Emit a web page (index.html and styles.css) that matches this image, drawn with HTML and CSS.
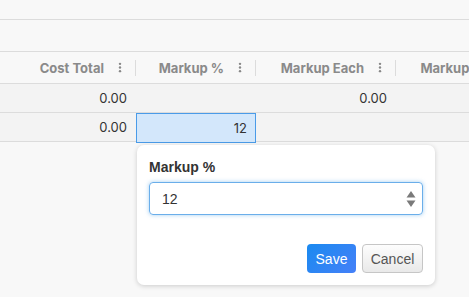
FILE: index.html
```html
<!DOCTYPE html>
<html lang="en">
<head>
    <meta charset="UTF-8">
    <meta name="viewport" content="width=device-width, initial-scale=1.0">
    <title>Markup grid</title>
    <link rel="stylesheet" href="styles.css">
</head>
<body>
    <div class="toolbar"></div>
    <div class="subbar"></div>

    <div class="grid">
        <div class="head-cell"><span>Cost Total</span><svg class="kebab" viewBox="0 0 4 12"><circle cx="2" cy="2" r="1.3"/><circle cx="2" cy="6" r="1.3"/><circle cx="2" cy="10" r="1.3"/></svg></div>
        <div class="head-cell"><span>Markup %</span><svg class="kebab" viewBox="0 0 4 12"><circle cx="2" cy="2" r="1.3"/><circle cx="2" cy="6" r="1.3"/><circle cx="2" cy="10" r="1.3"/></svg></div>
        <div class="head-cell"><span>Markup Each</span><svg class="kebab" viewBox="0 0 4 12"><circle cx="2" cy="2" r="1.3"/><circle cx="2" cy="6" r="1.3"/><circle cx="2" cy="10" r="1.3"/></svg></div>
        <div class="head-cell"><span>Markup Total</span><svg class="kebab" viewBox="0 0 4 12"><circle cx="2" cy="2" r="1.3"/><circle cx="2" cy="6" r="1.3"/><circle cx="2" cy="10" r="1.3"/></svg></div>

        <div class="cell">0.00</div>
        <div class="cell"></div>
        <div class="cell">0.00</div>
        <div class="cell"></div>

        <div class="cell">0.00</div>
        <div class="cell editing">12</div>
        <div class="cell"></div>
        <div class="cell"></div>
    </div>

    <div class="popup">
        <label class="popup-label" for="markup">Markup %</label>
        <div class="number-field">
            <input id="markup" type="text" value="12">
            <svg class="spinner" viewBox="0 0 10 18"><path d="M5 1 L9.5 7.5 H0.5 Z"/><path d="M5 17 L9.5 10.5 H0.5 Z"/></svg>
        </div>
        <div class="popup-actions">
            <button class="btn btn-save">Save</button>
            <button class="btn btn-cancel">Cancel</button>
        </div>
    </div>
</body>
</html>
```

FILE: styles.css
```css
body {
    margin: 0;
    padding: 0;
    background: #f8f8f8;
    font-family: 'Inter', 'Noto Sans', sans-serif;
    overflow: hidden;
    position: relative;
    height: 297px;
}

.toolbar {
    height: 19px;
    border-bottom: 1px solid #dcdcdc;
}

.subbar {
    height: 31px;
    border-bottom: 1px solid #dcdcdc;
}

.grid {
    display: grid;
    grid-template-columns: 136px 120px 140px 140px;
    grid-auto-rows: 29px;
    grid-template-rows: 32px;
}

.head-cell {
    position: relative;
    display: flex;
    align-items: center;
    justify-content: flex-end;
    gap: 8px;
    padding-right: 8px;
    border-bottom: 1px solid #dcdcdc;
    font-size: 13px;
    font-weight: 700;
    color: #8a8a8a;
    white-space: nowrap;
}

.head-cell::after {
    content: '';
    position: absolute;
    right: 0;
    top: 8px;
    height: 16px;
    border-right: 1px solid #dcdcdc;
}

.kebab {
    width: 16px;
    height: 11px;
    fill: #888;
}

.cell {
    display: flex;
    align-items: center;
    justify-content: flex-end;
    padding-right: 9px;
    background: #f3f3f3;
    border-bottom: 1px solid #dcdcdc;
    font-size: 13px;
    color: #333;
}

.cell.editing {
    background: #d3e7fb;
    border: 1px solid #4a9be8;
    padding-right: 8px;
    height: 28px;
}

.popup {
    position: absolute;
    left: 137px;
    top: 145px;
    width: 274px;
    height: 116px;
    padding: 12px 12px 12px;
    background: #fff;
    border-radius: 7px;
    box-shadow: 0 1px 5px rgba(0, 0, 0, 0.18);
    font-family: 'Liberation Sans', Arial, sans-serif;
    display: flex;
    flex-direction: column;
}

.popup-label {
    font-size: 14px;
    font-weight: bold;
    color: #333;
    line-height: 20px;
    margin-bottom: 5px;
}

.number-field {
    display: flex;
    align-items: center;
    height: 31px;
    border: 1px solid #6aaeea;
    border-radius: 4px;
    box-shadow: 0 0 4px rgba(102, 175, 233, 0.6);
    padding: 0 6px 0 12px;
}

.number-field input {
    flex: 1;
    border: none;
    outline: none;
    padding: 0;
    font-family: 'Liberation Sans', Arial, sans-serif;
    font-size: 14px;
    color: #333;
    background: transparent;
}

.spinner {
    width: 10px;
    height: 18px;
    fill: #7a7a7a;
}

.popup-actions {
    margin-top: auto;
    display: flex;
    justify-content: flex-end;
    gap: 6px;
}

.btn {
    height: 29px;
    border-radius: 4px;
    font-family: 'Liberation Sans', Arial, sans-serif;
    font-size: 14px;
    padding: 0;
    cursor: pointer;
}

.btn-save {
    width: 49px;
    border: none;
    color: #fff;
    background: linear-gradient(135deg, #1a8af0, #4580f8);
}

.btn-cancel {
    width: 61px;
    border: 1px solid #c6c6c6;
    color: #555;
    background: linear-gradient(#fdfdfd, #e9e9e9);
}
```
